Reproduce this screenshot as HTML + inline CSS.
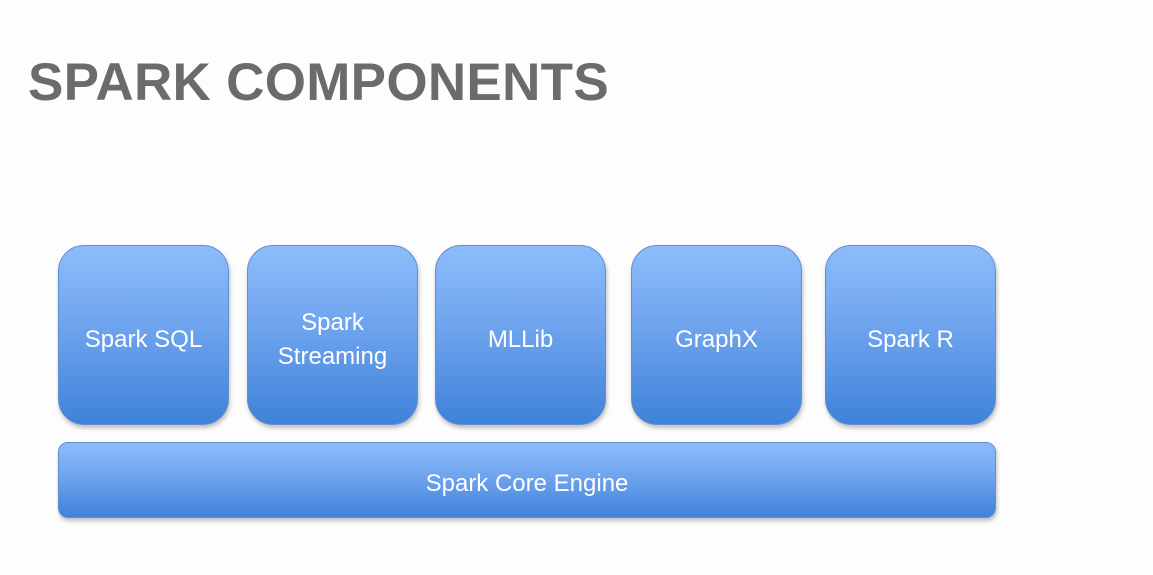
<!DOCTYPE html>
<html><head><style>
body{margin:0;width:1153px;height:575px;background:#fdfdfd;position:relative;overflow:hidden;font-family:"Liberation Sans",sans-serif}
h1{position:absolute;left:28px;top:53px;margin:0;font-size:53px;font-weight:bold;color:#6b6b6b;line-height:60px;letter-spacing:0.3px}
.b{position:absolute;box-sizing:border-box;border:1px solid #5f8fcf;border-radius:26px;background:linear-gradient(#8cbcfb,#6fa4ee 45%,#3f82d9);box-shadow:1px 3px 4px rgba(0,0,0,0.25);color:#fff;font-size:24px;display:flex;align-items:center;justify-content:center;text-align:center;line-height:34px;padding-top:10px}
</style></head><body>
<h1>SPARK COMPONENTS</h1>
<div class="b" style="left:58px;top:245px;width:171px;height:180px">Spark SQL</div>
<div class="b" style="left:247px;top:245px;width:171px;height:180px">Spark<br>Streaming</div>
<div class="b" style="left:435px;top:245px;width:171px;height:180px">MLLib</div>
<div class="b" style="left:631px;top:245px;width:171px;height:180px">GraphX</div>
<div class="b" style="left:825px;top:245px;width:171px;height:180px">Spark R</div>
<div class="b" style="left:58px;top:442px;width:938px;height:76px;border-radius:10px;padding-top:8px">Spark Core Engine</div>
</body></html>
